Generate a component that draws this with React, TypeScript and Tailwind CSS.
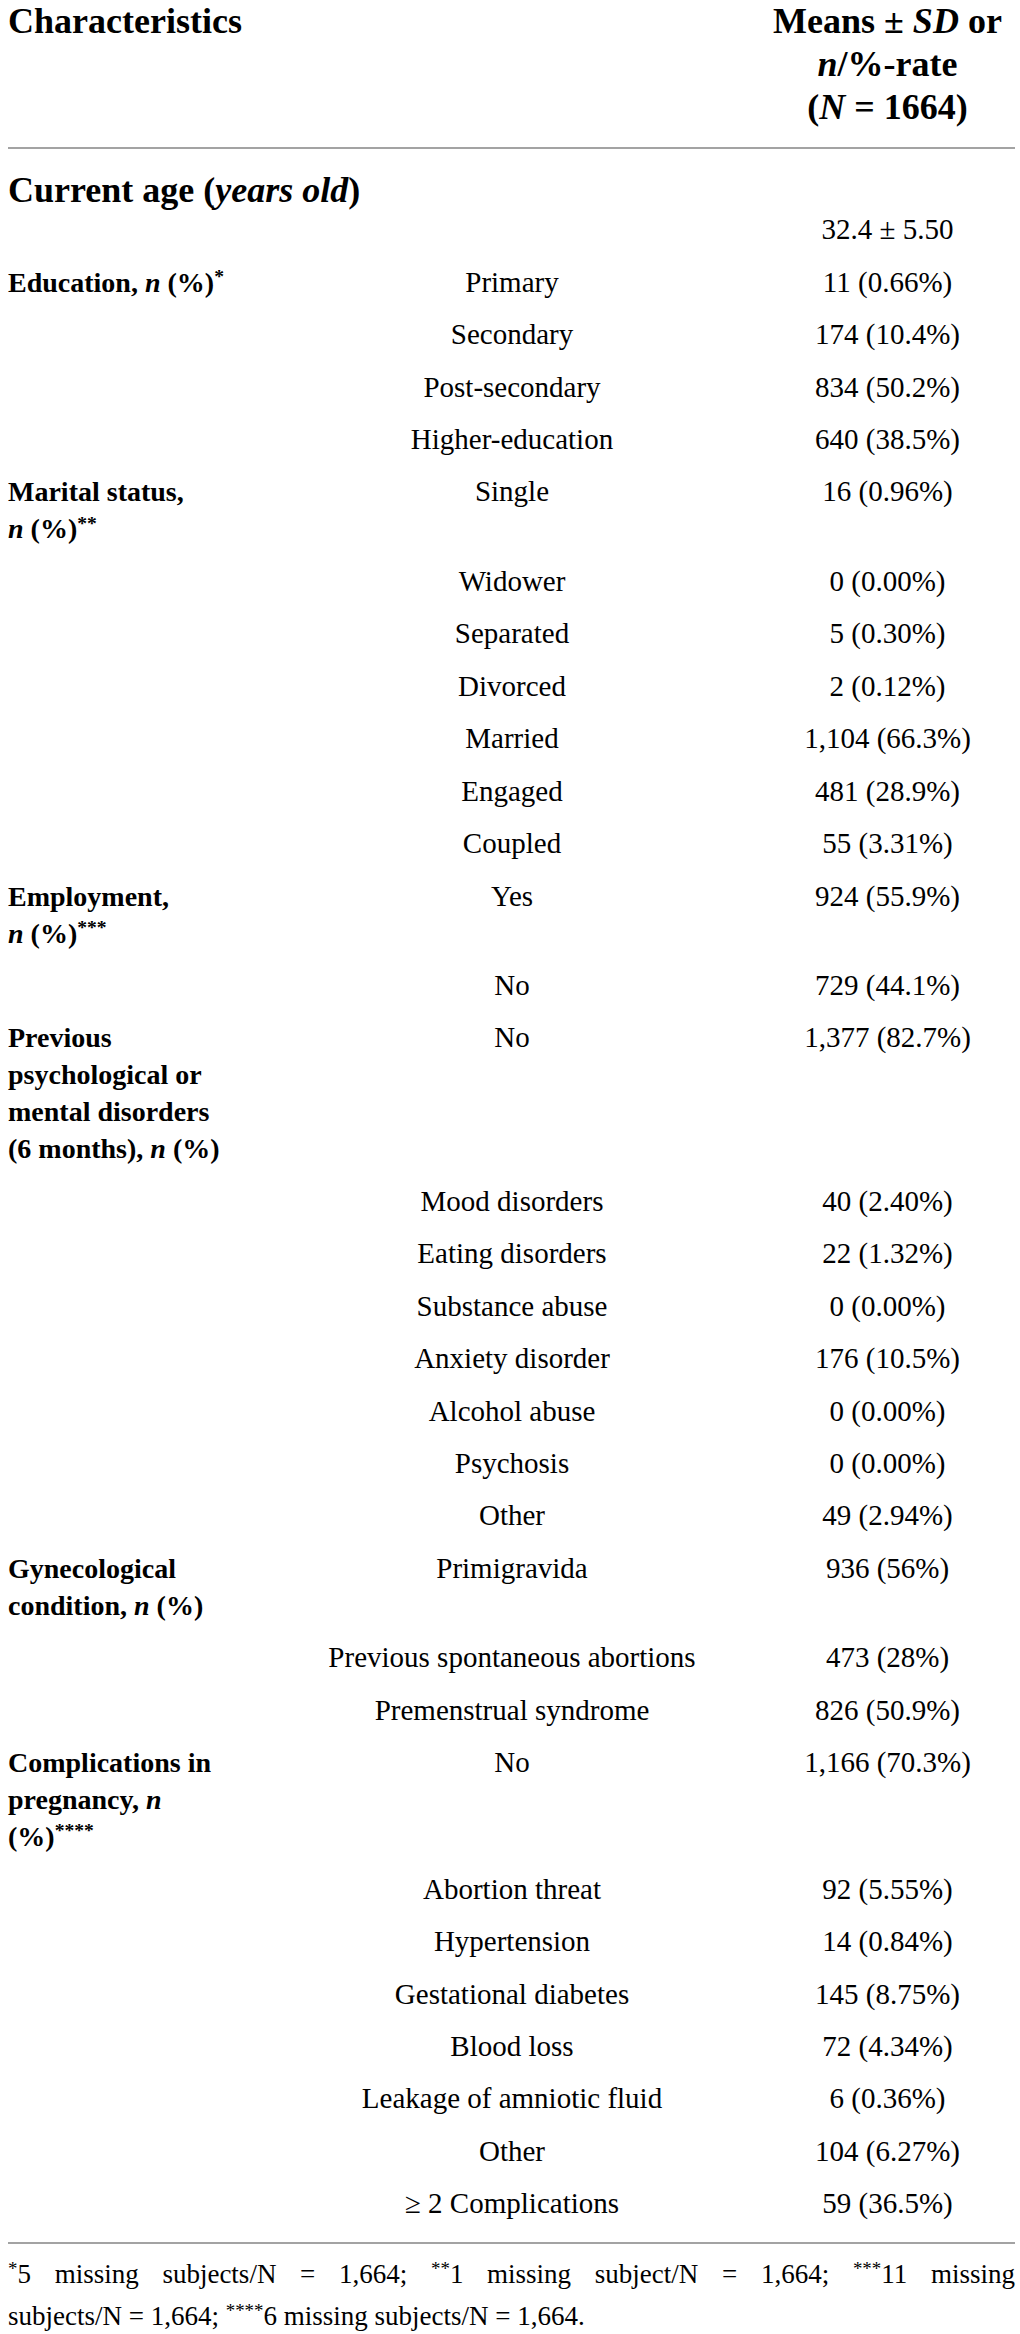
import React from "react";

type Row = { label?: React.ReactNode; item: string; value: string };

const Star = ({ n }: { n: number }) => (
  <sup className="text-[0.7em] top-[-0.45em]">{"*".repeat(n)}</sup>
);

const rows: Row[] = [
  {
    label: (
      <>
        Education, <i>n</i> (%)
        <Star n={1} />
      </>
    ),
    item: "Primary",
    value: "11 (0.66%)",
  },
  { item: "Secondary", value: "174 (10.4%)" },
  { item: "Post-secondary", value: "834 (50.2%)" },
  { item: "Higher-education", value: "640 (38.5%)" },
  {
    label: (
      <>
        Marital status,
        <br />
        <i>n</i> (%)
        <Star n={2} />
      </>
    ),
    item: "Single",
    value: "16 (0.96%)",
  },
  { item: "Widower", value: "0 (0.00%)" },
  { item: "Separated", value: "5 (0.30%)" },
  { item: "Divorced", value: "2 (0.12%)" },
  { item: "Married", value: "1,104 (66.3%)" },
  { item: "Engaged", value: "481 (28.9%)" },
  { item: "Coupled", value: "55 (3.31%)" },
  {
    label: (
      <>
        Employment,
        <br />
        <i>n</i> (%)
        <Star n={3} />
      </>
    ),
    item: "Yes",
    value: "924 (55.9%)",
  },
  { item: "No", value: "729 (44.1%)" },
  {
    label: (
      <>
        Previous
        <br />
        psychological or
        <br />
        mental disorders
        <br />
        (6 months), <i>n</i> (%)
      </>
    ),
    item: "No",
    value: "1,377 (82.7%)",
  },
  { item: "Mood disorders", value: "40 (2.40%)" },
  { item: "Eating disorders", value: "22 (1.32%)" },
  { item: "Substance abuse", value: "0 (0.00%)" },
  { item: "Anxiety disorder", value: "176 (10.5%)" },
  { item: "Alcohol abuse", value: "0 (0.00%)" },
  { item: "Psychosis", value: "0 (0.00%)" },
  { item: "Other", value: "49 (2.94%)" },
  {
    label: (
      <>
        Gynecological
        <br />
        condition, <i>n</i> (%)
      </>
    ),
    item: "Primigravida",
    value: "936 (56%)",
  },
  { item: "Previous spontaneous abortions", value: "473 (28%)" },
  { item: "Premenstrual syndrome", value: "826 (50.9%)" },
  {
    label: (
      <>
        Complications in
        <br />
        pregnancy, <i>n</i>
        <br />
        (%)
        <Star n={4} />
      </>
    ),
    item: "No",
    value: "1,166 (70.3%)",
  },
  { item: "Abortion threat", value: "92 (5.55%)" },
  { item: "Hypertension", value: "14 (0.84%)" },
  { item: "Gestational diabetes", value: "145 (8.75%)" },
  { item: "Blood loss", value: "72 (4.34%)" },
  { item: "Leakage of amniotic fluid", value: "6 (0.36%)" },
  { item: "Other", value: "104 (6.27%)" },
  { item: "\u2265 2 Complications", value: "59 (36.5%)" },
];

const App: React.FC = () => {
  return (
    <div className="w-[1020px] bg-white pl-[8px] pr-[5px] text-black font-['Liberation_Serif',serif]">
      {/* header */}
      <div className="grid grid-cols-[752px_1fr] text-[36px] font-bold leading-[43px]">
        <div>Characteristics</div>
        <div className="text-center">
          Means ± <i>SD</i> or
          <br />
          <i>n</i>/%-rate
          <br />(<i>N</i> = 1664)
        </div>
      </div>
      <div className="mt-[18px] h-[2px] bg-[#a3a3a3]" />

      <div className="pt-[24px] text-[36px] font-bold leading-[34px]">
        Current age (<i>years old</i>)
      </div>
      <div className="grid grid-cols-[752px_1fr] pt-[4px] pb-[8px] text-[29px] leading-[37px]">
        <div />
        <div className="text-center">32.4 ± 5.50</div>
      </div>

      {rows.map((r, i) => (
        <div
          key={i}
          className="grid grid-cols-[256px_496px_1fr] py-[7.72px] leading-[37px]"
        >
          <div className="whitespace-nowrap text-[28px] font-bold">
            {r.label}
          </div>
          <div className="text-center text-[29px]">{r.item}</div>
          <div className="text-center text-[29px]">{r.value}</div>
        </div>
      ))}

      <div className="mt-[12px] h-[2px] bg-[#a3a3a3]" />

      {/* footnote */}
      <div className="pt-[9px] text-[27px] leading-[42px]">
        <div className="text-justify [text-align-last:justify]">
          <Star n={1} />5 missing subjects/N = 1,664; <Star n={2} />1 missing
          subject/N = 1,664; <Star n={3} />11 missing
        </div>
        <div>
          subjects/N = 1,664; <Star n={4} />6 missing subjects/N = 1,664.
        </div>
      </div>
    </div>
  );
};

export default App;
